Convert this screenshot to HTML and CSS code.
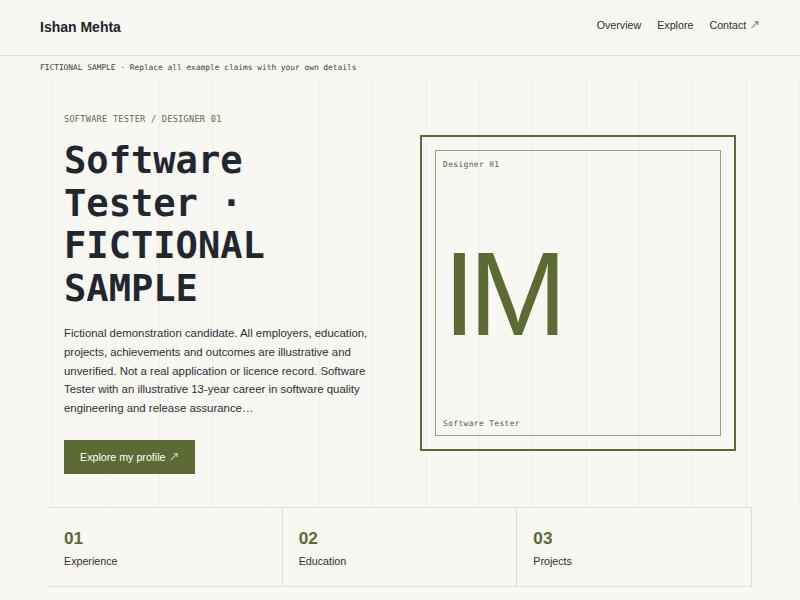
FILE: index.html
```html
<!DOCTYPE html>
<html lang="en">
<head>
<meta charset="utf-8">
<title>Ishan Mehta</title>
<link rel="stylesheet" href="styles.css">
</head>
<body>
<header class="site-header">
  <div class="brand">Ishan Mehta</div>
  <nav class="nav">
    <a href="#overview">Overview</a>
    <a href="#explore">Explore</a>
    <a href="#contact">Contact <span class="arrow">↗</span></a>
  </nav>
</header>
<div class="notice">FICTIONAL SAMPLE · Replace all example claims with your own details</div>
<section class="hero">
  <div class="hero-inner">
    <div class="hero-copy">
      <p class="eyebrow">SOFTWARE TESTER / DESIGNER 01</p>
      <h1 class="title">Software Tester · FICTIONAL SAMPLE</h1>
      <p class="lead">Fictional demonstration candidate. All employers, education, projects, achievements and outcomes are illustrative and unverified. Not a real application or licence record. Software Tester with an illustrative 13-year career in software quality engineering and release assurance…</p>
      <a class="btn" href="#explore">Explore my profile <span class="arrow">↗</span></a>
    </div>
    <div class="card">
      <div class="card-frame">
        <span class="card-label">Designer 01</span>
        <span class="monogram">IM</span>
        <span class="card-label">Software Tester</span>
      </div>
    </div>
  </div>
</section>
<section class="stats">
  <div class="stat">
    <div class="stat-num">01</div>
    <div class="stat-label">Experience</div>
  </div>
  <div class="stat">
    <div class="stat-num">02</div>
    <div class="stat-label">Education</div>
  </div>
  <div class="stat">
    <div class="stat-num">03</div>
    <div class="stat-label">Projects</div>
  </div>
</section>
</body>
</html>
```

FILE: styles.css
```css
* { box-sizing: border-box; }

html, body {
  margin: 0;
  padding: 0;
}

body {
  background: #f8f7f2;
  color: #2b2f33;
  font-family: "Liberation Sans", Arial, sans-serif;
}

a { color: inherit; text-decoration: none; }

.site-header {
  height: 56px;
  padding: 0 40px;
  display: flex;
  align-items: center;
  justify-content: space-between;
  border-bottom: 1px solid #dedcd6;
}

.brand {
  font-size: 14px;
  font-weight: 700;
  color: #1e2329;
  padding-bottom: 1px;
}

.nav {
  display: flex;
  gap: 16px;
  font-size: 10.7px;
  color: #2b2f33;
  padding-bottom: 4px;
}

.arrow {
  font-family: "DejaVu Sans", sans-serif;
  font-size: 1.2em;
  font-weight: 200;
  line-height: 1;
}

.notice {
  padding: 6px 40px 6px;
  font-family: "DejaVu Sans Mono", "Liberation Mono", monospace;
  font-size: 7.85px;
  line-height: 11px;
  color: #3a3d40;
}

.hero {
  padding: 34px 64px 33px;
  background-color: #f8f7f2;
  background-image: linear-gradient(to right, transparent calc(100% - 1px), rgba(0, 0, 0, 0.04) 0);
  background-size: calc(100% / 15) 100%;
}

.hero-inner {
  display: grid;
  grid-template-columns: 1fr 1fr;
  column-gap: 40px;
  align-items: center;
}

.eyebrow {
  margin: 0;
  font-family: "DejaVu Sans Mono", monospace;
  font-size: 8.6px;
  letter-spacing: 0.26px;
  line-height: 13px;
  color: #646d3e;
}

.title {
  margin: 14px 0 0;
  font-family: "DejaVu Sans Mono", monospace;
  font-weight: 700;
  font-size: 37.1px;
  line-height: 42.6px;
  color: #1f2831;
}

.lead {
  margin: 14px 0 0;
  font-size: 11.4px;
  line-height: 18.7px;
  color: #2b2f33;
}

.btn {
  display: inline-block;
  margin-top: 22px;
  height: 34px;
  line-height: 34px;
  padding: 0 16px;
  background: #5b6b33;
  color: #ffffff;
  font-size: 10.7px;
}

.card {
  aspect-ratio: 1 / 1;
  border: 2px solid #5b6b33;
  padding: 13px;
}

.card-frame {
  height: 100%;
  border: 1px solid #98a07e;
  padding: 8px 7px 6px;
  display: flex;
  flex-direction: column;
  justify-content: space-between;
  align-items: flex-start;
}

.card-label {
  font-family: "DejaVu Sans Mono", monospace;
  font-size: 7.86px;
  letter-spacing: 0.4px;
  line-height: 11px;
  color: #545948;
}

.monogram {
  font-size: 118px;
  line-height: 1;
  letter-spacing: -0.06em;
  color: #5b6b33;
}

.stats {
  margin: 0 48px;
  display: grid;
  grid-template-columns: repeat(3, 1fr);
  border-top: 1px solid #dedcd6;
  border-bottom: 1px solid #dedcd6;
}

.stat {
  padding: 20px 16px 18px;
  border-right: 1px solid #dedcd6;
}

.stat-num {
  font-size: 17.2px;
  line-height: 20px;
  font-weight: 700;
  color: #5b6b33;
}

.stat-label {
  margin-top: 6px;
  font-size: 10.7px;
  line-height: 14px;
  color: #2b2f33;
}
```
